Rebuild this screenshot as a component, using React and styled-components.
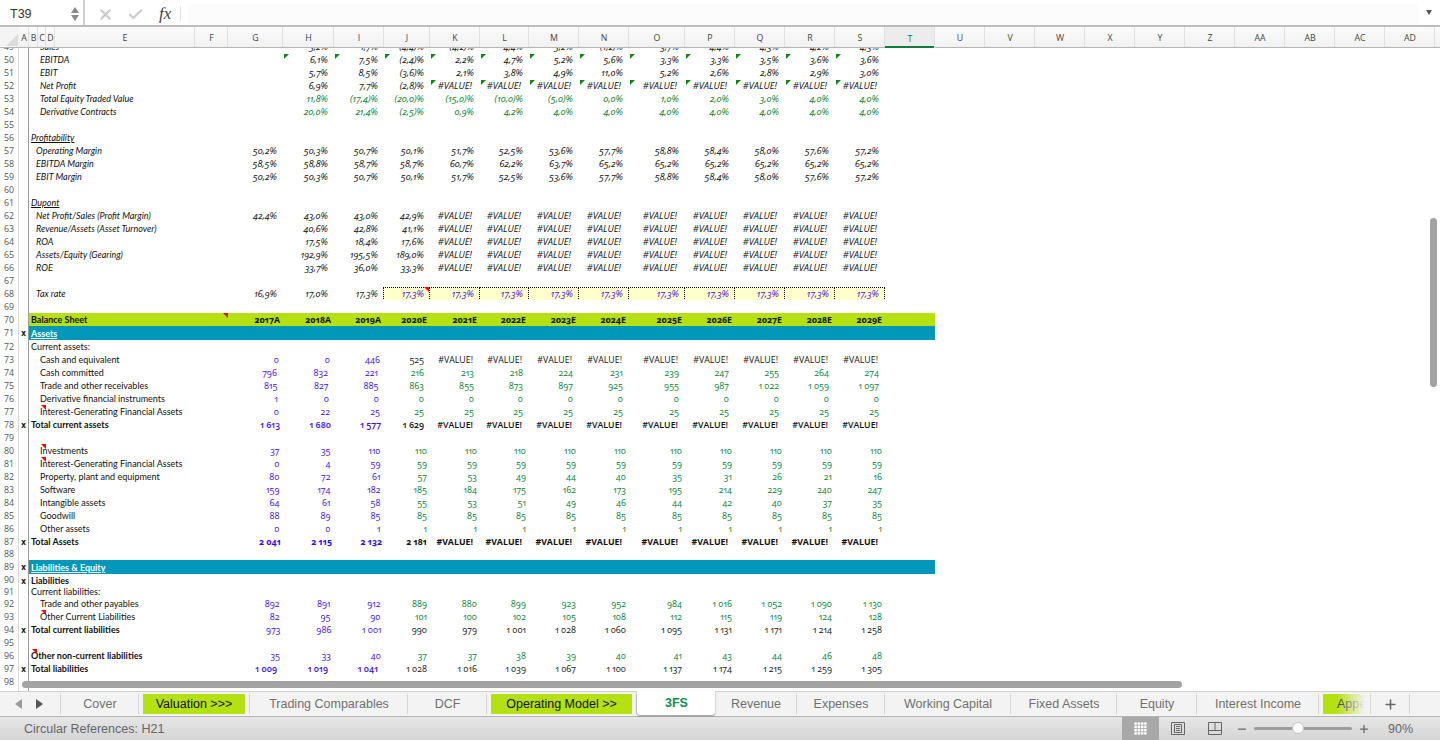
import React from 'react';
import styled, { createGlobalStyle, css } from 'styled-components';
import { X, Check, Plus, Minus } from 'lucide-react';

const GlobalStyle = createGlobalStyle`
  html, body { margin: 0; padding: 0; background: #fff; }
  * { box-sizing: border-box; }
`;

const COLORS = { k: '#111', b: '#3a08f4', g: '#067f36' };
const DATA_COLS = '55px 51px 50px 46px 50px 49px 50px 50px 56px 50px 50px 50px 50px 50px';
const HEAD_COLS = [
  ['A', 10], ['B', 9], ['C', 8], ['D', 9], ['E', 140], ['F', 33], ['G', 55], ['H', 51], ['I', 50], ['J', 46],
  ['K', 50], ['L', 49], ['M', 50], ['N', 50], ['O', 56], ['P', 50], ['Q', 50], ['R', 50], ['S', 50], ['T', 50],
  ['U', 50], ['V', 50], ['W', 50], ['X', 50], ['Y', 50], ['Z', 50], ['AA', 50], ['AB', 50], ['AC', 50], ['AD', 50],
];

const Page = styled.div`
  width: 1440px;
  height: 740px;
  display: flex;
  flex-direction: column;
  overflow: hidden;
  position: relative;
  font-family: "Liberation Sans", Arial, sans-serif;
`;

const FormulaBar = styled.div`
  height: 26px;
  display: flex;
  align-items: stretch;
  background: #fff;
  border-bottom: 1px solid #bdbdbd;
  flex: none;
`;
const NameBox = styled.div`
  width: 85px;
  display: flex;
  align-items: center;
  justify-content: space-between;
  padding: 3px 4px 0 10px;
  font-size: 12.5px;
  color: #333;
  border-right: 2px solid #cfcfcf;
`;
const Stepper = styled.div`
  display: flex;
  flex-direction: column;
  gap: 2px;
`;
const StepArrow = styled.span`
  width: 0;
  height: 0;
  border-left: 4px solid transparent;
  border-right: 4px solid transparent;
  ${(p) => (p.$up ? 'border-bottom: 6px solid #8a8a8a;' : 'border-top: 6px solid #8a8a8a;')}
`;
const FormulaTools = styled.div`
  width: 103px;
  display: flex;
  align-items: center;
  gap: 13px;
  padding: 3px 0 0 12px;
  color: #cbcbcb;
`;
const FxLabel = styled.span`
  font: italic 17px "Liberation Serif", serif;
  color: #444;
  padding: 0 6px 0 2px;
  margin-right: -8px;
  width: 24px;
  border-right: 1px solid #e2e2e2;
  line-height: 16px;
`;
const FormulaInput = styled.div`
  flex: 1;
  margin: 4px 0 0 0;
  background: #fcfcfc;
`;
const FormulaDrop = styled.div`
  width: 22px;
  display: flex;
  align-items: center;
  justify-content: center;
  &::after {
    content: '';
    border-left: 3.5px solid transparent;
    border-right: 3.5px solid transparent;
    border-top: 5px solid #555;
  }
`;

const HeaderBar = styled.div`
  height: 22px;
  display: flex;
  flex: none;
  border-top: 1px solid #bdbdbd;
  border-bottom: 1px solid #b5b5b5;
  background: linear-gradient(#fbfbfb, #f1f1f1);
`;
const Corner = styled.div`
  width: 19px;
  position: relative;
  overflow: hidden;
  background: #f4f4f4;
  &::after {
    content: '';
    position: absolute;
    right: 1px;
    bottom: 1px;
    border-left: 12px solid transparent;
    border-bottom: 12px solid #dcdcdc;
  }
`;
const ColHead = styled.div`
  width: ${(p) => p.$w}px;
  flex: none;
  display: flex;
  align-items: center;
  justify-content: center;
  padding: 2px 0 0 1px;
  font: 8.8px "Open Sans", sans-serif;
  color: #444;
  border-right: 1px solid #e0e0e0;
  ${(p) =>
    p.$active &&
    css`
      background: #ececec;
      color: #107c41;
      box-shadow: inset 0 -2px 0 #107c41;
      margin-bottom: -1px;
    `}
`;

const Sheet = styled.div`
  flex: none;
  height: 643px;
  overflow: hidden;
  font-family: "Lato", sans-serif;
`;
const Row = styled.div`
  height: ${(p) => p.$h || 13}px;
  display: flex;
  overflow: hidden;
  align-items: ${(p) => (p.$clipTop ? 'flex-end' : 'flex-start')};
`;
const RowNum = styled.div`
  width: 19px;
  height: ${(p) => p.$h || 13}px;
  flex: none;
  display: flex;
  align-items: center;
  justify-content: center;
  padding-top: 1px;
  font: 8.8px/13px "Open Sans", sans-serif;
  color: #555;
  background: #fff;
  border-right: 1px solid #dadada;
`;
const Flag = styled.div`
  width: 10px;
  height: ${(p) => p.$h || 13}px;
  flex: none;
  font: bold 8px/13px "Open Sans", sans-serif;
  text-align: center;
  color: #111;
  border-right: 1px solid #9a9a9a;
`;
const Body = styled.div`
  width: 906px;
  height: ${(p) => p.$h || 13}px;
  flex: none;
  display: grid;
  grid-template-columns: 199px ${DATA_COLS};
  background: ${(p) => p.$band || 'transparent'};
`;
const Label = styled.div`
  position: relative;
  padding-left: ${(p) => p.$x - 29}px;
  font-size: 9px;
  line-height: ${(p) => (p.$h || 13) + 1}px;
  white-space: nowrap;
  color: ${(p) => (p.$light ? '#fff' : '#111')};
  font-style: ${(p) => (p.$italic ? 'italic' : 'normal')};
  font-weight: ${(p) => (p.$bold ? 700 : 400)};
  text-decoration: ${(p) => (p.$under ? 'underline' : 'none')};
`;
const Cell = styled.div`
  position: relative;
  text-align: right;
  padding-right: ${(p) => p.$pad ?? 4}px;
  font-size: ${(p) => (p.$pct ? 9.3 : 8.8)}px;
  line-height: 14px;
  white-space: nowrap;
  font-family: "Open Sans", sans-serif;
  font-feature-settings: "onum" 1, "pnum" 1;
  color: ${(p) => COLORS[p.$c] || COLORS.k};
  font-style: ${(p) => (p.$pct ? 'italic' : 'normal')};
  font-weight: ${(p) => p.$weight || 500};
  ${(p) =>
    p.$input &&
    css`
      background: #ffffcc;
      border: 1px dotted #000;
      line-height: 12px;
      margin-left: -1px;
    `}
  ${(p) =>
    p.$tick &&
    css`
      &::before {
        content: '';
        position: absolute;
        left: 1px;
        top: 1px;
        border-top: 5px solid #0a8a0a;
        border-right: 5px solid transparent;
      }
    `}
`;
const Marker = styled.span`
  position: absolute;
  top: 0;
  left: ${(p) => p.$x - 29}px;
  border-top: 5px solid #f00;
  border-left: 5px solid transparent;
`;
const CellMarker = styled(Marker)`
  left: auto;
  right: -1px;
  top: -1px;
  border-top-width: 6px;
  border-left-width: 6px;
`;

const HScroll = styled.div`
  position: absolute;
  left: 22px;
  top: 681px;
  width: 1160px;
  height: 7px;
  border-radius: 4px;
  background: #a3a3a3;
`;
const VScroll = styled.div`
  position: absolute;
  left: 1430px;
  top: 218px;
  width: 7px;
  height: 169px;
  border-radius: 4px;
  background: #a3a3a3;
`;

const TabBar = styled.div`
  height: 26px;
  flex: none;
  display: flex;
  align-items: stretch;
  background: #f3f3f3;
  border-top: 1px solid #d0d0d0;
  border-bottom: 1px solid #b4b4b4;
  font-size: 12.5px;
`;
const TabNav = styled.div`
  width: 61px;
  display: flex;
  align-items: center;
  gap: 14px;
  padding-left: 15px;
  border-right: 1px solid #d4d4d4;
  margin: 2px 0;
`;
const NavArrow = styled.span`
  border-top: 5px solid transparent;
  border-bottom: 5px solid transparent;
  ${(p) => (p.$left ? 'border-right: 7px solid #999;' : 'border-left: 7px solid #555;')}
`;
const Tab = styled.div`
  width: ${(p) => p.$w}px;
  flex: none;
  display: flex;
  align-items: center;
  justify-content: center;
  padding-left: 1px;
  color: #707070;
  border-right: 1px solid #d4d4d4;
  margin: 2px 0;
  white-space: nowrap;
  overflow: hidden;
`;
const SectionTab = styled(Tab)`
  padding: 0 4px;
  background-clip: content-box;
  background-image: linear-gradient(#b5e012, #b5e012);
  color: #111;
`;
const ActiveTab = styled(Tab)`
  background: #fff;
  color: #0f8a5f;
  font-weight: 700;
  border: none;
  margin: -1px 0 1px 0;
  border-radius: 0 0 3px 3px;
  box-shadow: 0 1px 2px rgba(0, 0, 0, 0.4);
  overflow: visible;
`;
const FadeTab = styled(Tab)`
  position: relative;
  padding-left: 4px;
  background-clip: content-box;
  background-image: linear-gradient(#b5e012, #b5e012);
  color: #333;
  justify-content: flex-start;
  text-indent: 14px;
  &::after {
    content: '';
    position: absolute;
    top: 0;
    bottom: 0;
    left: 18px;
    right: 0;
    background: linear-gradient(90deg, rgba(243, 243, 243, 0), #f3f3f3 85%);
  }
`;
const AddTab = styled(Tab)`
  color: #666;
`;

const StatusBar = styled.div`
  flex: none;
  height: 23px;
  display: flex;
  align-items: stretch;
  justify-content: space-between;
  background: linear-gradient(#e6e6e6, #d5d5d5);
  color: #666;
  font-size: 12.5px;
`;
const StatusText = styled.div`
  padding-left: 24px;
  display: flex;
  align-items: center;
`;
const StatusTools = styled.div`
  display: flex;
  align-items: center;
`;
const ViewBtn = styled.div`
  width: 37px;
  height: 100%;
  display: flex;
  align-items: center;
  justify-content: center;
  color: #666;
  background: ${(p) => (p.$on ? '#a8a8a8' : 'transparent')};
`;
const ViewGap = styled.span`
  width: 3px;
`;
const Slider = styled.div`
  position: relative;
  width: 98px;
  height: 3px;
  border-radius: 2px;
  background: #9c9c9c;
  margin: 0 6px;
`;
const Knob = styled.span`
  position: absolute;
  left: 38px;
  top: -5px;
  width: 12px;
  height: 12px;
  border-radius: 50%;
  background: #fff;
  border: 1px solid #c4c4c4;
`;
const Zoom = styled.div`
  width: 70px;
  padding-left: 18px;
  color: #666;
`;

const V = '#VALUE!';
const rep = (v, n) => Array(n).fill(v);
const pcts = (list) => list.map((v) => (v === V ? V : `${v}%`));

const pctRow = (n, text, vals, o = {}) => ({
  n,
  label: { text, x: o.x || 40, italic: true },
  start: o.start ?? 1,
  ticks: o.ticks,
  cells: pcts(vals).map((v) => ({ v, c: o.c || 'k', pct: true, pad: v === V ? 8 : 6 })),
});
// bp / rp: how far the blue actuals and the forecasts sit from the right of their column
const numRow = (n, text, blue, rest, o = {}) => ({
  n,
  flag: o.flag,
  label: { text, x: o.x || 40, bold: o.bold, mark: o.mark },
  start: 0,
  cells: [
    ...blue.map((v) => ({ v, c: 'b', weight: o.weight, pad: o.bp ?? 3.5 })),
    ...rest.map((v) => ({
      v,
      c: v === V || o.rest === 'k' ? 'k' : 'g',
      weight: o.restWeight,
      pad: v === V ? 7 : o.rp ?? 3,
    })),
  ],
});
const blank = (n, h) => ({ n, h, label: null, cells: [] });
const head = (n, text, o = {}) => ({ n, flag: o.flag, h: o.h, label: { text, x: 31, ...o }, cells: [] });

const MARGIN_A = ['50,2', '50,3', '50,7', '50,1', '51,7', '52,5', '53,6', '57,7', '58,8', '58,4', '58,0', '57,6', '57,2'];

const ROWS = [
  { ...pctRow(49, 'Sales', ['5,2', '1,7', '(4,4)', '(4,2)', '4,4', '5,2', '(1,2)', '3,7', '4,4', '4,3', '4,2', '4,3']), clipH: 5, clipTop: true },
  pctRow(50, 'EBITDA', ['6,1', '7,5', '(2,4)', '2,2', '4,7', '5,2', '5,6', '3,3', '3,3', '3,5', '3,6', '3,6'], { ticks: 0 }),
  pctRow(51, 'EBIT', ['5,7', '8,5', '(3,6)', '2,1', '3,8', '4,9', '11,0', '5,2', '2,6', '2,8', '2,9', '3,0']),
  pctRow(52, 'Net Profit', ['6,9', '7,7', '(2,8)', ...rep(V, 9)], { ticks: 3 }),
  pctRow(53, 'Total Equity Traded Value', ['11,8', '(17,4)', '(20,0)', '(15,0)', '(10,0)', '(5,0)', '0,0', '1,0', '2,0', '3,0', '4,0', '4,0'], { c: 'g' }),
  pctRow(54, 'Derivative Contracts', ['20,0', '21,4', '(2,5)', '0,9', '4,2', ...rep('4,0', 7)], { c: 'g' }),
  blank(55),
  head(56, 'Profitability', { italic: true, under: true }),
  pctRow(57, 'Operating Margin', MARGIN_A, { x: 36, start: 0 }),
  pctRow(58, 'EBITDA Margin', ['58,5', '58,8', '58,7', '58,7', '60,7', '62,2', '63,7', ...rep('65,2', 6)], { x: 36, start: 0 }),
  pctRow(59, 'EBIT Margin', MARGIN_A, { x: 36, start: 0 }),
  blank(60),
  head(61, 'Dupont', { italic: true, under: true }),
  pctRow(62, 'Net Profit/Sales (Profit Margin)', ['42,4', '43,0', '43,0', '42,9', ...rep(V, 9)], { x: 36, start: 0 }),
  pctRow(63, 'Revenue/Assets (Asset Turnover)', ['40,6', '42,8', '41,1', ...rep(V, 9)], { x: 36 }),
  pctRow(64, 'ROA', ['17,5', '18,4', '17,6', ...rep(V, 9)], { x: 36 }),
  pctRow(65, 'Assets/Equity (Gearing)', ['192,9', '195,5', '189,0', ...rep(V, 9)], { x: 36 }),
  pctRow(66, 'ROE', ['33,7', '36,0', '33,3', ...rep(V, 9)], { x: 36 }),
  blank(67),
  {
    n: 68,
    label: { text: 'Tax rate', x: 36, italic: true },
    start: 0,
    cells: [
      ...pcts(['16,9', '17,0', '17,3']).map((v) => ({ v, pct: true, pad: 6 })),
      ...rep('17,3%', 10).map((v, i) => ({ v, pct: true, c: 'b', input: true, red: i === 0, pad: 5 })),
    ],
  },
  blank(69),
  {
    n: 70,
    band: '#b5e012',
    label: { text: 'Balance Sheet', x: 31, bold: true, mark: 223 },
    start: 0,
    cells: ['2017A', '2018A', '2019A', '2020E', '2021E', '2022E', '2023E', '2024E', '2025E', '2026E', '2027E', '2028E', '2029E'].map((v) => ({ v, weight: 700, pad: 3 })),
  },
  { n: 71, h: 14, flag: 'x', band: '#0097b8', label: { text: 'Assets', x: 31, bold: true, under: true, light: true }, cells: [] },
  head(72, 'Current assets:'),
  numRow(73, 'Cash and equivalent', ['0', '0', '446'], ['525', ...rep(V, 9)], { rest: 'k', rp: 6, bp: 4 }),
  numRow(74, 'Cash committed', ['796', '832', '221'], ['216', '213', '218', '224', '231', '239', '247', '255', '264', '274'], { rp: 6, bp: 6 }),
  numRow(75, 'Trade and other receivables', ['815', '827', '885'], ['863', '855', '873', '897', '925', '955', '987', '1 022', '1 059', '1 097'], { rp: 6, bp: 5.5 }),
  numRow(76, 'Derivative financial instruments', ['1', '0', '0'], rep('0', 10), { rp: 6, bp: 5 }),
  numRow(77, 'Interest-Generating Financial Assets', ['0', '22', '25'], rep('25', 10), { mark: 41, rp: 6, bp: 4 }),
  numRow(78, 'Total current assets', ['1 613', '1 680', '1 577'], ['1 629', ...rep(V, 9)], { flag: 'x', x: 31, bold: true, rest: 'k', rp: 6, bp: 3, weight: 600, restWeight: 600 }),
  blank(79),
  numRow(80, 'Investments', ['37', '35', '110'], rep('110', 10), { mark: 41 }),
  numRow(81, 'Interest-Generating Financial Assets', ['0', '4', '59'], rep('59', 10), { mark: 41 }),
  numRow(82, 'Property, plant and equipment', ['80', '72', '61'], ['57', '53', '49', '44', '40', '35', '31', '26', '21', '16']),
  numRow(83, 'Software', ['159', '174', '182'], ['185', '184', '175', '162', '173', '195', '214', '229', '240', '247']),
  numRow(84, 'Intangible assets', ['64', '61', '58'], ['55', '53', '51', '49', '46', '44', '42', '40', '37', '35']),
  numRow(85, 'Goodwill', ['88', '89', '85'], rep('85', 10)),
  numRow(86, 'Other assets', ['0', '0', '1'], rep('1', 10)),
  numRow(87, 'Total Assets', ['2 041', '2 115', '2 132'], ['2 181', ...rep(V, 9)], { flag: 'x', x: 31, bold: true, rest: 'k', bp: 2, weight: 700, restWeight: 700 }),
  blank(88, 12),
  { n: 89, h: 14, flag: 'x', band: '#0097b8', label: { text: 'Liabilities & Equity', x: 31, bold: true, under: true, light: true }, cells: [] },
  head(90, 'Liabilities', { flag: 'x', bold: true, h: 12 }),
  head(91, 'Current liabilities:', { h: 11 }),
  numRow(92, 'Trade and other payables', ['892', '891', '912'], ['889', '880', '899', '923', '952', '984', '1 016', '1 052', '1 090', '1 130']),
  numRow(93, 'Other Current Liabilities', ['82', '95', '90'], ['101', '100', '102', '105', '108', '112', '115', '119', '124', '128'], { mark: 41 }),
  numRow(94, 'Total current liabilities', ['973', '986', '1 001'], ['990', '979', '1 001', '1 028', '1 060', '1 095', '1 131', '1 171', '1 214', '1 258'], { flag: 'x', x: 31, bold: true, rest: 'k', bp: 2.5 }),
  blank(95),
  numRow(96, 'Other non-current liabilities', ['35', '33', '40'], ['37', '37', '38', '39', '40', '41', '43', '44', '46', '48'], { x: 31, bold: true, mark: 32, bp: 3 }),
  numRow(97, 'Total liabilities', ['1 009', '1 019', '1 041'], ['1 028', '1 016', '1 039', '1 067', '1 100', '1 137', '1 174', '1 215', '1 259', '1 305'], { flag: 'x', x: 31, bold: true, rest: 'k', bp: 6, weight: 600 }),
  blank(98),
  { ...head(99, 'Equity', { bold: true }), clipH: 3 },
];

const SheetRow = ({ row }) => {
  const { n, h, clipH, clipTop, flag, band, label, cells, start = 0, ticks } = row;
  const full = [...(start ? [null] : []), ...cells];
  return (
    <Row $h={clipH || h} $clipTop={clipTop}>
      <RowNum $h={h}>{n}</RowNum>
      <Flag $h={h}>{flag}</Flag>
      <Body $h={h} $band={band}>
        <Label $x={label ? label.x : 31} $h={h} $italic={label?.italic} $bold={label?.bold} $under={label?.under} $light={label?.light}>
          {label?.text}
          {label?.mark && <Marker $x={label.mark} />}
        </Label>
        {full.map((cell, i) =>
          cell ? (
            <Cell
              key={i}
              $c={cell.c}
              $pct={cell.pct}
              $weight={cell.weight}
              $input={cell.input}
              $pad={cell.pad}
              $tick={ticks !== undefined && i >= ticks + 1}
            >
              {cell.v}
              {cell.red && <CellMarker />}
            </Cell>
          ) : (
            <Cell key={i} />
          ),
        )}
      </Body>
    </Row>
  );
};

export default function App() {
  return (
    <Page>
      <GlobalStyle />
      <FormulaBar>
        <NameBox>
          T39
          <Stepper>
            <StepArrow $up />
            <StepArrow />
          </Stepper>
        </NameBox>
        <FormulaTools>
          <X size={17} strokeWidth={3} />
          <Check size={17} strokeWidth={3} />
          <FxLabel>fx</FxLabel>
        </FormulaTools>
        <FormulaInput />
        <FormulaDrop />
      </FormulaBar>
      <HeaderBar>
        <Corner />
        {HEAD_COLS.map(([name, w]) => (
          <ColHead key={name} $w={w} $active={name === 'T'}>
            {name}
          </ColHead>
        ))}
      </HeaderBar>
      <Sheet>
        {ROWS.map((row) => (
          <SheetRow key={row.n} row={row} />
        ))}
      </Sheet>
      <TabBar>
        <TabNav>
          <NavArrow $left />
          <NavArrow />
        </TabNav>
        <Tab $w={78}>Cover</Tab>
        <SectionTab $w={111}>Valuation &gt;&gt;&gt;</SectionTab>
        <Tab $w={158}>Trading Comparables</Tab>
        <Tab $w={79}>DCF</Tab>
        <SectionTab $w={150}>Operating Model &gt;&gt;</SectionTab>
        <ActiveTab $w={78}>3FS</ActiveTab>
        <Tab $w={82}>Revenue</Tab>
        <Tab $w={88}>Expenses</Tab>
        <Tab $w={126}>Working Capital</Tab>
        <Tab $w={106}>Fixed Assets</Tab>
        <Tab $w={80}>Equity</Tab>
        <Tab $w={122}>Interest Income</Tab>
        <FadeTab $w={52}>Appendix</FadeTab>
        <AddTab $w={39}>
          <Plus size={15} strokeWidth={2.5} />
        </AddTab>
      </TabBar>
      <StatusBar>
        <StatusText>Circular References: H21</StatusText>
        <StatusTools>
          <ViewBtn $on>
            <svg width="13" height="13" viewBox="0 0 13 13" fill="#fff" stroke="#a8a8a8" strokeWidth="0.8">
              <path d="M0 0h13v13H0zM0 3.25h13M0 6.5h13M0 9.75h13M3.25 0v13M6.5 0v13M9.75 0v13" />
            </svg>
          </ViewBtn>
          <ViewBtn>
            <svg width="14" height="13" viewBox="0 0 14 13" fill="none" stroke="#666" strokeWidth="1">
              <path d="M.5.5h13v12H.5zM3.5 2.5h7v8h-7zM5 4.5h4M5 6.5h4M5 8.5h4" />
            </svg>
          </ViewBtn>
          <ViewBtn>
            <svg width="14" height="13" viewBox="0 0 14 13" fill="none" stroke="#666" strokeWidth="1">
              <path d="M.5.5h13v12H.5zM.5 8.5h13M7 .5v8" />
            </svg>
          </ViewBtn>
          <ViewGap />
          <Minus size={12} strokeWidth={2.5} />
          <Slider>
            <Knob />
          </Slider>
          <Plus size={12} strokeWidth={2.5} />
          <Zoom>90%</Zoom>
        </StatusTools>
      </StatusBar>
      <HScroll />
      <VScroll />
    </Page>
  );
}
